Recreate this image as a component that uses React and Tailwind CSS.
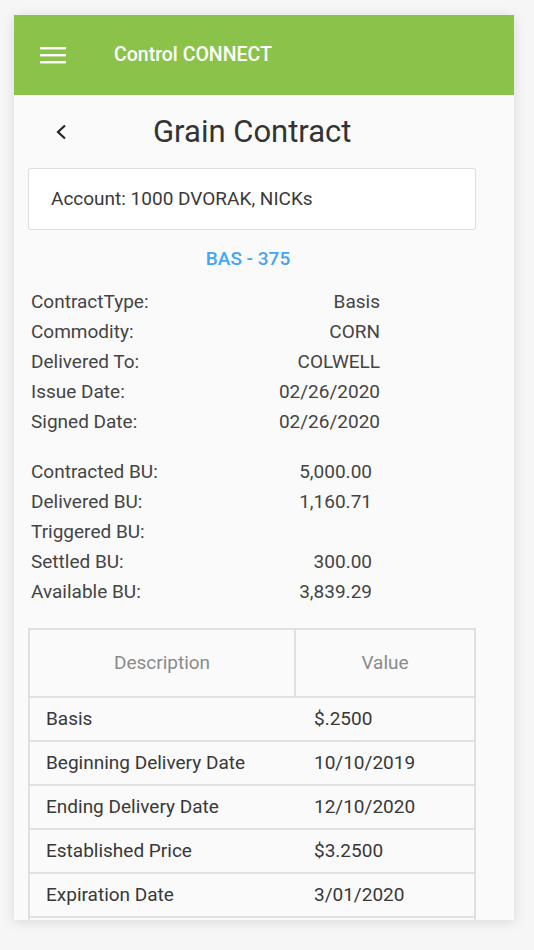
import React from "react";

const info1 = [
  ["ContractType:", "Basis"],
  ["Commodity:", "CORN"],
  ["Delivered To:", "COLWELL"],
  ["Issue Date:", "02/26/2020"],
  ["Signed Date:", "02/26/2020"],
];
const info2 = [
  ["Contracted BU:", "5,000.00"],
  ["Delivered BU:", "1,160.71"],
  ["Triggered BU:", ""],
  ["Settled BU:", "300.00"],
  ["Available BU:", "3,839.29"],
];
const rows = [
  ["Basis", "$.2500"],
  ["Beginning Delivery Date", "10/10/2019"],
  ["Ending Delivery Date", "12/10/2020"],
  ["Established Price", "$3.2500"],
  ["Expiration Date", "3/01/2020"],
  ["", ""],
];

export default function App() {
  return (
    <div
      className="w-[534px] h-[950px] bg-[#f6f6f6] pt-[15px] pl-[14px] overflow-hidden"
      style={{ fontFamily: "Roboto, 'Liberation Sans', sans-serif" }}
    >
      <div className="w-[500px] h-[905px] bg-[#fafafa] overflow-hidden shadow-[0_2px_12px_rgba(0,0,0,0.12)]">
        <div className="h-[80px] bg-[#8bc34a] flex items-center">
          <svg className="ml-[26px]" width="26" height="18" viewBox="0 0 26 18">
            <rect x="0" y="1" width="26" height="2.4" fill="#fff" />
            <rect x="0" y="8" width="26" height="2.4" fill="#fff" />
            <rect x="0" y="15" width="26" height="2.4" fill="#fff" />
          </svg>
          <div className="ml-[48px] text-white text-[19.5px] font-medium leading-none">
            Control CONNECT
          </div>
        </div>

        <div className="flex items-center pt-[15px] h-[59px]">
          <svg className="ml-[41px]" width="12" height="16" viewBox="0 0 12 16">
            <polyline points="10,1.5 3,8 10,14.5" fill="none" stroke="#222" strokeWidth="2.2" />
          </svg>
          <div className="ml-[86px] text-[31px] leading-[44px] text-[#333]">Grain Contract</div>
        </div>

        <div className="mt-[14px] ml-[14px] w-[448px] h-[62px] bg-white border border-[#dedede] rounded-[2px] flex items-center pl-[22px] text-[19px] text-[#3a3a3a]">
          Account: 1000 DVORAK, NICKs
        </div>

        <div className="mt-[17px] ml-[14px] w-[440px] text-center text-[19px] leading-[24px] text-[#42a5f5] font-medium">
          BAS - 375
        </div>

        <div className="mt-[16px] ml-[17px] w-[349px] text-[19px] text-[#444]">
          {info1.map(([l, v]) => (
            <div key={l} className="flex justify-between h-[30px] items-center">
              <span>{l}</span>
              <span>{v}</span>
            </div>
          ))}
        </div>

        <div className="mt-[20px] ml-[17px] w-[341px] text-[19px] text-[#444]">
          {info2.map(([l, v]) => (
            <div key={l} className="flex justify-between h-[30px] items-center">
              <span>{l}</span>
              <span>{v}</span>
            </div>
          ))}
        </div>

        <div className="mt-[21px] ml-[14px] w-[448px] border-2 border-b-0 border-[#e0e0e0] text-[19px]">
          <div className="flex h-[68px] border-b-2 border-[#e0e0e0] text-[#8a8a8a]">
            <div className="w-[266px] border-r-2 border-[#e0e0e0] flex items-center justify-center">
              Description
            </div>
            <div className="flex-1 flex items-center justify-center">Value</div>
          </div>
          {rows.map(([d, v], i) => (
            <div
              key={i}
              className="flex h-[44px] items-center border-b-2 border-[#e0e0e0] text-[#383838]"
            >
              <div className="w-[267px] pl-[16px]">{d}</div>
              <div className="flex-1 pl-[17px]">{v}</div>
            </div>
          ))}
        </div>
      </div>
    </div>
  );
}
